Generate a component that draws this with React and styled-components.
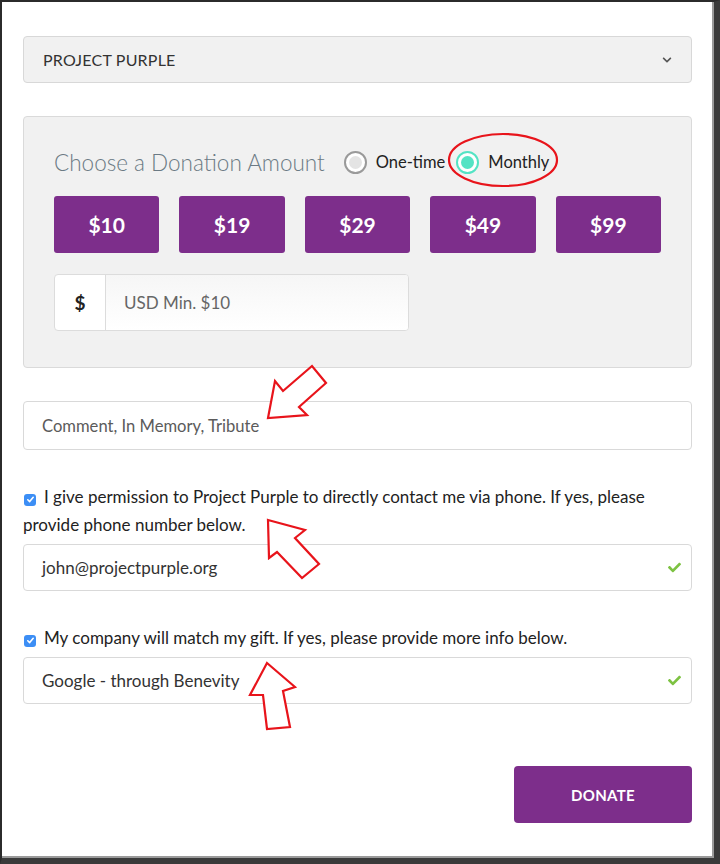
import React, { useState } from "react";
import styled, { createGlobalStyle } from "styled-components";
import { FaChevronDown, FaCheck } from "react-icons/fa";

const GlobalStyle = createGlobalStyle`
  html, body {
    margin: 0;
    padding: 0;
    background: #ffffff;
  }
  body {
    font-family: Lato, "Open Sans", "Liberation Sans", sans-serif;
    color: #222;
  }
`;

const PURPLE = "#7d2e8b";

const Frame = styled.div`
  position: relative;
  box-sizing: border-box;
  width: 720px;
  height: 864px;
  border-top: 2px solid #2b2b2b;
  border-left: 2px solid #2b2b2b;
  border-right: 6px solid #3a3a3a;
  border-bottom: 6px solid #3a3a3a;
  box-shadow: inset -2px -2px 0 #9a9a9a;
  padding: 34px 0 0 21px;
  overflow: hidden;
`;

const Form = styled.div`
  width: 669px;
  display: flex;
  flex-direction: column;
`;

const SelectBox = styled.div`
  box-sizing: border-box;
  height: 47px;
  display: flex;
  align-items: center;
  justify-content: space-between;
  padding: 0 19px 0 19px;
  background: #f1f1f1;
  border: 1px solid #d8d8d8;
  border-radius: 4px;
  font-size: 16px;
  color: #333;
  letter-spacing: 0.2px;
  svg {
    color: #555;
  }
`;

const Panel = styled.div`
  box-sizing: border-box;
  margin-top: 33px;
  height: 252px;
  background: #f1f1f1;
  border: 1px solid #dadada;
  border-radius: 4px;
  padding: 30px 30px 0 30px;
`;

const PanelHead = styled.div`
  display: flex;
  align-items: center;
  height: 30px;
`;

const Title = styled.h2`
  margin: 0 19px 0 0;
  font-size: 22.5px;
  font-weight: 300;
  color: #6b7a84;
`;

const RadioOption = styled.label`
  display: flex;
  align-items: center;
  gap: 9px;
  margin-right: 11px;
  font-size: 16.5px;
  color: #222;
`;

const RadioDot = styled.span`
  box-sizing: border-box;
  width: 23px;
  height: 23px;
  border-radius: 50%;
  border: 2px solid ${(p) => (p.$on ? "#54e3c4" : "#9a9a9a")};
  background: #fff;
  display: flex;
  align-items: center;
  justify-content: center;
  &::after {
    content: "";
    width: 13px;
    height: 13px;
    border-radius: 50%;
    background: ${(p) => (p.$on ? "#54e3c4" : "#e4e4e4")};
  }
`;

const AmountRow = styled.div`
  display: flex;
  gap: 20px;
  margin-top: 19px;
`;

const AmountButton = styled.button`
  width: 106px;
  height: 57px;
  border: none;
  border-radius: 3px;
  background: ${PURPLE};
  color: #fff;
  font-family: inherit;
  font-size: 21px;
  font-weight: 700;
  cursor: pointer;
`;

const InputGroup = styled.div`
  display: flex;
  width: 355px;
  height: 57px;
  margin-top: 21px;
  box-sizing: border-box;
  border: 1px solid #dcdcdc;
  border-radius: 4px;
  overflow: hidden;
  background: #fff;
`;

const Addon = styled.span`
  width: 50px;
  display: flex;
  align-items: center;
  justify-content: center;
  border-right: 1px solid #dcdcdc;
  font-size: 19px;
  font-weight: 700;
  color: #222;
`;

const AmountInput = styled.div`
  flex: 1;
  display: flex;
  align-items: center;
  padding-left: 18px;
  background: linear-gradient(to bottom, #f6f6f6, #ffffff);
  font-size: 17px;
  color: #666;
`;

const TextField = styled.div`
  box-sizing: border-box;
  height: ${(p) => p.$h || 47}px;
  margin-top: ${(p) => p.$mt || 0}px;
  display: flex;
  align-items: center;
  justify-content: space-between;
  padding: 0 10px 0 18px;
  border: 1px solid #d9d9d9;
  border-radius: 4px;
  background: #fff;
  font-size: ${(p) => (p.$placeholder ? 16.6 : 17)}px;
  color: ${(p) => (p.$placeholder ? "#5b5b5b" : "#333")};
  svg {
    color: #7dc242;
  }
`;

const CheckLabel = styled.label`
  display: block;
  margin-top: 33px;
  line-height: 28px;
  font-size: 17px;
  color: #222;
`;

const Box = styled.span`
  display: inline-flex;
  align-items: center;
  justify-content: center;
  vertical-align: -1px;
  width: 12px;
  height: 12px;
  margin: 0 8px 0 1px;
  border-radius: 3px;
  background: #3c8ef5;
  color: #fff;
`;

const DonateButton = styled.button`
  align-self: flex-end;
  margin-top: 62px;
  width: 178px;
  height: 57px;
  border: none;
  border-radius: 4px;
  background: ${PURPLE};
  color: #fff;
  font-family: inherit;
  font-size: 15px;
  font-weight: 700;
  letter-spacing: 0.3px;
  cursor: pointer;
`;

const Overlay = styled.svg`
  position: absolute;
  top: -2px;
  left: -2px;
  width: 720px;
  height: 864px;
  pointer-events: none;
`;

const Check = () => (
  <Box>
    <svg width="9" height="9" viewBox="0 0 10 10">
      <path d="M2 5.3 L4.1 7.3 L8 2.6" fill="none" stroke="#fff" strokeWidth="1.8" strokeLinecap="round" strokeLinejoin="round" />
    </svg>
  </Box>
);

const amounts = [10, 19, 29, 49, 99];

export default function App() {
  const [plan, setPlan] = useState("monthly");

  return (
    <>
      <GlobalStyle />
      <Frame>
        <Form>
          <SelectBox>
            PROJECT PURPLE
            <FaChevronDown size={10} />
          </SelectBox>

          <Panel>
            <PanelHead>
              <Title>Choose a Donation Amount</Title>
              <RadioOption onClick={() => setPlan("once")}>
                <RadioDot $on={plan === "once"} />
                One-time
              </RadioOption>
              <RadioOption onClick={() => setPlan("monthly")}>
                <RadioDot $on={plan === "monthly"} />
                Monthly
              </RadioOption>
            </PanelHead>
            <AmountRow>
              {amounts.map((a) => (
                <AmountButton key={a}>${a}</AmountButton>
              ))}
            </AmountRow>
            <InputGroup>
              <Addon>$</Addon>
              <AmountInput>USD Min. $10</AmountInput>
            </InputGroup>
          </Panel>

          <TextField $h={49} $mt={33} $placeholder>
            Comment, In Memory, Tribute
          </TextField>

          <CheckLabel>
            <Check />
            I give permission to Project Purple to directly contact me via phone. If yes, please provide phone number below.
          </CheckLabel>
          <TextField $mt={5}>
            john@projectpurple.org
            <FaCheck size={13} />
          </TextField>

          <CheckLabel>
            <Check />
            My company will match my gift. If yes, please provide more info below.
          </CheckLabel>
          <TextField $mt={5}>
            Google - through Benevity
            <FaCheck size={13} />
          </TextField>

          <DonateButton>DONATE</DonateButton>
        </Form>

        <Overlay viewBox="0 0 720 864">
          <ellipse cx="503" cy="160" rx="54" ry="26" fill="none" stroke="#e8141b" strokeWidth="2.2" />
          <polygon
            points="268,418 275,381 283,391 312,366 326,383 299,407 307,415"
            fill="#fff"
            stroke="#e8141b"
            strokeWidth="2.2"
          />
          <polygon
            points="268,520 305,530 295,538 319,564 302,578 277,552 269,558"
            fill="#fff"
            stroke="#e8141b"
            strokeWidth="2.2"
          />
          <polygon
            points="267,663 295,687 283,691 290,727 267,729 263,695 250,695"
            fill="#fff"
            stroke="#e8141b"
            strokeWidth="2.2"
          />
        </Overlay>
      </Frame>
    </>
  );
}
